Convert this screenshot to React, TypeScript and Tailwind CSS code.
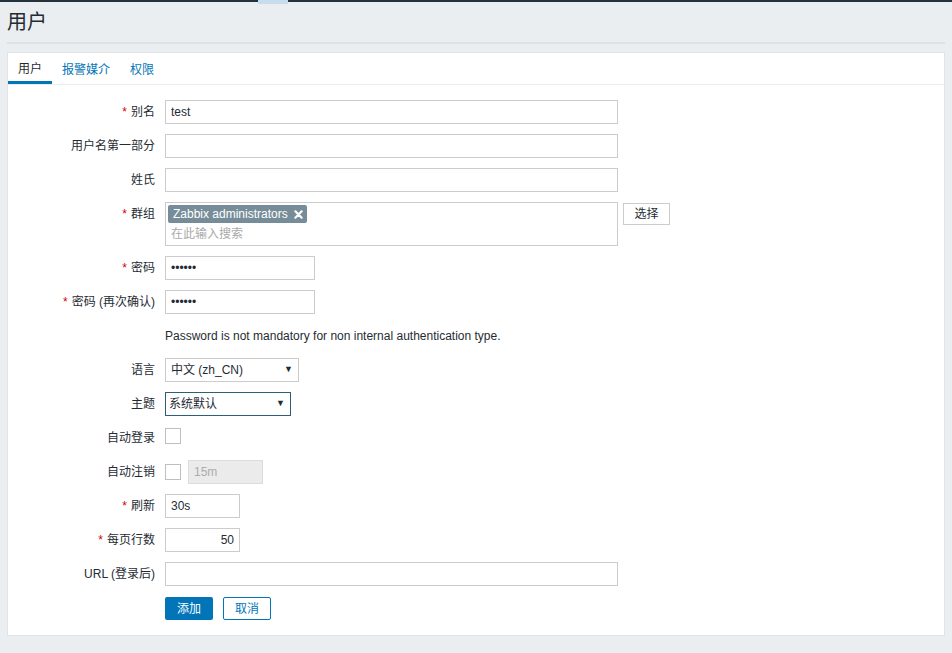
import React from "react";

const FONT = { fontFamily: '"Liberation Sans", Arial, "Noto Sans CJK SC", sans-serif' };

function Label({ text, req, top }: { text: string; req?: boolean; top?: boolean }) {
  return (
    <div className={`w-[157px] shrink-0 pr-[10px] text-right text-[12px] text-[#1f2c33] ${top ? "pt-[5px] leading-[14px]" : "leading-[24px]"}`}>
      {req && <span className="mr-[4px] text-[#d40000]">*</span>}
      {text}
    </div>
  );
}

function TextInput({ w, value, right, disabled }: { w: string; value?: string; right?: boolean; disabled?: boolean }) {
  return (
    <div
      className={`${w} h-[24px] border border-[#cccccc] px-[5px] text-[12px] leading-[22px] ${right ? "text-right" : ""} ${disabled ? "bg-[#ebebeb] text-[#acacac] border-[#dcdcdc]" : "bg-white text-[#1f2c33]"}`}
    >
      {value}
    </div>
  );
}

function Row({ children, cls = "" }: { children: React.ReactNode; cls?: string }) {
  return <div className={`flex items-start ${cls}`}>{children}</div>;
}

export default function App() {
  return (
    <div className="relative h-[653px] w-[952px] overflow-hidden bg-[#ebeef0]" style={FONT}>
      <div className="h-[2px] w-full bg-[#24323d]" />
      <div className="absolute left-[258px] top-0 h-[4px] w-[30px] bg-[#c7dcec]" />
      <div className="px-[7px]">
        <div className="flex h-[42px] items-center border-b-2 border-[#dde2e5]">
          <h1 className="text-[20px] font-normal leading-none text-[#1f2c33]">用户</h1>
        </div>
        <div className="mt-[8px] h-[584px] border border-[#dfe4e7] bg-white">
          <div className="flex h-[32px] border-b border-[#ebeef0] text-[12px]">
            <div className="flex h-full items-center border-b-[3px] border-[#0275b8] px-[10px] pt-[3px] text-[#1f2c33]">用户</div>
            <div className="flex h-full items-center px-[10px] pt-[3px] text-[#0275b8]">报警媒介</div>
            <div className="flex h-full items-center px-[10px] pt-[3px] text-[#0275b8]">权限</div>
          </div>
          <div className="flex flex-col gap-[10px] pt-[15px]">
            <Row>
              <Label text="别名" req />
              <TextInput w="w-[453px]" value="test" />
            </Row>
            <Row>
              <Label text="用户名第一部分" />
              <TextInput w="w-[453px]" />
            </Row>
            <Row>
              <Label text="姓氏" />
              <TextInput w="w-[453px]" />
            </Row>
            <Row>
              <Label text="群组" req top />
              <div className="flex h-[44px] w-[453px] flex-col items-start border border-[#cccccc] px-[2px] pt-[2px]">
                <div className="flex h-[18px] items-center gap-[6px] rounded-[2px] bg-[#768d99] pl-[5px] pr-[4px] text-[12px] text-white">
                  <span>Zabbix administrators</span>
                  <svg width="9" height="9" viewBox="0 0 10 10">
                    <path d="M1.5 1.5 L8.5 8.5 M8.5 1.5 L1.5 8.5" stroke="white" strokeWidth="2.4" strokeLinecap="round" />
                  </svg>
                </div>
                <div className="pl-[3px] pt-[3px] text-[12px] leading-[16px] text-[#aaaaaa]">在此输入搜索</div>
              </div>
              <div className="ml-[5px] mt-px flex h-[22px] w-[47px] items-center justify-center border border-[#cccccc] bg-white text-[12px] text-[#1f2c33]">
                选择
              </div>
            </Row>
            <Row>
              <Label text="密码" req />
              <TextInput w="w-[150px]" value="••••••" />
            </Row>
            <Row>
              <Label text="密码 (再次确认)" req />
              <TextInput w="w-[150px]" value="••••••" />
            </Row>
            <Row>
              <div className="w-[157px] shrink-0" />
              <div className="py-[5px] text-[12px] leading-[14px] text-[#1f2c33]">
                Password is not mandatory for non internal authentication type.
              </div>
            </Row>
            <Row>
              <Label text="语言" />
              <div className="flex h-[24px] w-[134px] items-center justify-between border border-[#cccccc] bg-white pl-[5px] pr-[5px] text-[12px] text-[#1f2c33]">
                <span>中文 (zh_CN)</span>
                <span className="text-[9px]">▼</span>
              </div>
            </Row>
            <Row>
              <Label text="主题" />
              <div className="flex h-[24px] w-[126px] items-center justify-between border border-[#2f5d7c] bg-white pl-[3px] pr-[5px] text-[12px] text-[#1f2c33]">
                <span>系统默认</span>
                <span className="text-[9px]">▼</span>
              </div>
            </Row>
            <Row cls="h-[24px]">
              <Label text="自动登录" />
              <div className="mt-[2px] h-[16px] w-[16px] border border-[#bfbfbf] bg-white" />
            </Row>
            <Row>
              <Label text="自动注销" />
              <div className="mr-[7px] mt-[4px] h-[16px] w-[16px] border border-[#bfbfbf] bg-white" />
              <TextInput w="w-[75px]" value="15m" disabled />
            </Row>
            <Row>
              <Label text="刷新" req />
              <TextInput w="w-[75px]" value="30s" />
            </Row>
            <Row>
              <Label text="每页行数" req />
              <TextInput w="w-[75px]" value="50" right />
            </Row>
            <Row>
              <Label text="URL (登录后)" />
              <TextInput w="w-[453px]" />
            </Row>
            <Row cls="pt-px">
              <div className="w-[157px] shrink-0" />
              <div className="flex h-[23px] w-[48px] items-center justify-center rounded-[2px] bg-[#0275b8] text-[12px] text-white">添加</div>
              <div className="ml-[10px] flex h-[23px] w-[48px] items-center justify-center rounded-[2px] border border-[#0275b8] bg-white text-[12px] text-[#0275b8]">取消</div>
            </Row>
          </div>
        </div>
      </div>
    </div>
  );
}
